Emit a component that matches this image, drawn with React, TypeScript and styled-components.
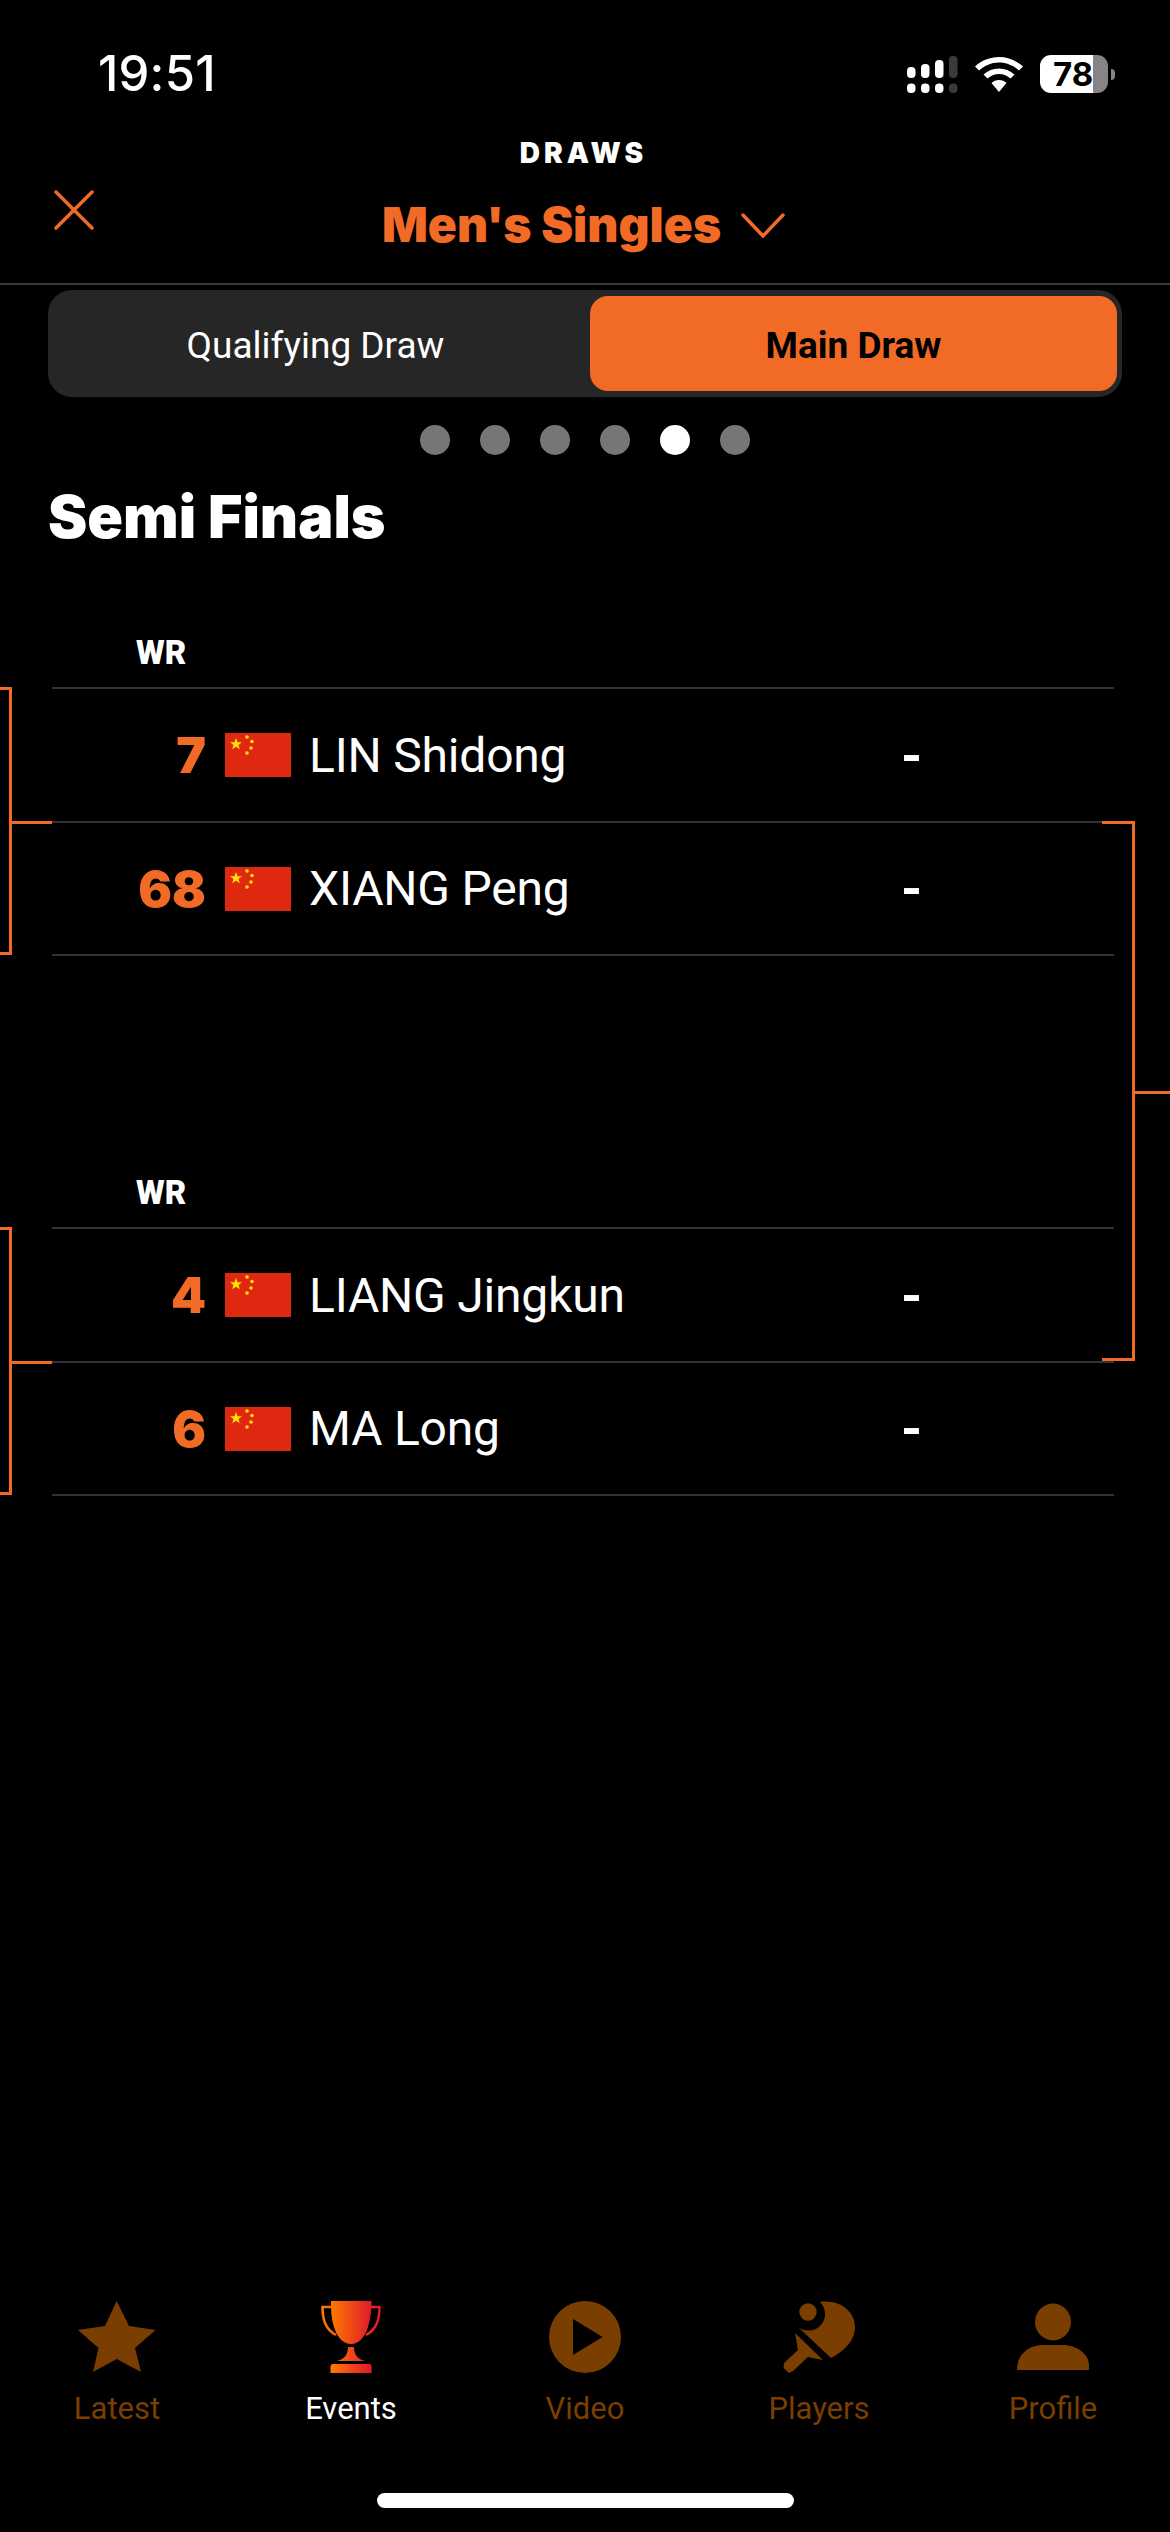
import styled, {createGlobalStyle} from 'styled-components';

const orange = '#f26b26';
const brown = '#7a3e00';
const nameFont = '"Roboto", "Liberation Sans", sans-serif';
const wideFont = '"Inter", "Liberation Sans", sans-serif';

const rounds = [
  [
    {rank: 7, name: 'LIN Shidong'},
    {rank: 68, name: 'XIANG Peng'},
  ],
  [
    {rank: 4, name: 'LIANG Jingkun'},
    {rank: 6, name: 'MA Long'},
  ],
];

const GlobalStyle = createGlobalStyle`
  html, body {
    margin: 0;
    padding: 0;
    background: #000;
  }
`;

function App() {
  return (
    <Page>
      <GlobalStyle />
      <StatusBar>
        <Time>19:51</Time>
        <StatusIcons>
          <SignalIcon />
          <WifiIcon />
          <Battery>
            <BatteryLevel>78</BatteryLevel>
          </Battery>
          <BatteryCap />
        </StatusIcons>
      </StatusBar>

      <Header>
        <CloseButton>
          <svg width="40" height="40" viewBox="0 0 40 40" fill="none" stroke={orange} strokeWidth="3.5" strokeLinecap="round">
            <path d="M2 2L38 38M38 2L2 38" />
          </svg>
        </CloseButton>
        <TitleBlock>
          <Eyebrow>DRAWS</Eyebrow>
          <TitleRow>
            <Title>Men's Singles</Title>
            <svg width="44" height="25" viewBox="0 0 44 25" fill="none" stroke={orange} strokeWidth="3.5" strokeLinecap="round">
              <path d="M2 2L22 23L42 2" />
            </svg>
          </TitleRow>
        </TitleBlock>
      </Header>

      <Segments>
        <Segment>Qualifying Draw</Segment>
        <Segment $active>Main Draw</Segment>
      </Segments>

      <Dots>
        {[0, 1, 2, 3, 4, 5].map((i) => (
          <Dot key={i} $active={i === 4} />
        ))}
      </Dots>

      <RoundTitle>Semi Finals</RoundTitle>

      <Rounds>
        {rounds.map((match, m) => (
          <Match key={m}>
            <LeftBracket />
            {m === 0 && <RightBracket />}
            <WrLabel>WR</WrLabel>
            {match.map((player) => (
              <Row key={player.name}>
                <Rank>{player.rank}</Rank>
                <Flag />
                <Name>{player.name}</Name>
                <Score>-</Score>
              </Row>
            ))}
          </Match>
        ))}
      </Rounds>

      <TabBar>
        <Tab>
          <svg width="78" height="72" viewBox="0 0 78 72" fill={brown}>
            <path d="M38.7 0L51 25L77.5 29L57 47L63 71L38.7 58L15 71L20.5 47L0 29L27 25Z" />
          </svg>
          <TabLabel>Latest</TabLabel>
        </Tab>
        <Tab>
          <svg width="60" height="72" viewBox="0 0 60 72">
            <defs>
              <linearGradient id="cup" x1="0" y1="0" x2="1" y2="0">
                <stop offset="0" stopColor="#ff7a00" />
                <stop offset="1" stopColor="#e0182d" />
              </linearGradient>
            </defs>
            <path
              fill="url(#cup)"
              d="M10 0H50.5C50.5 8 50 16 47 26C44 36 38 43 30 43C22 43 16 36 13 26C10 16 10 8 10 0ZM27 46H33C33 53 36 58 44 60H16C24 58 27 53 27 46ZM12 63H48Q50.6 63 50.6 66V72H9.5V66Q9.5 63 12 63Z"
            />
            <path
              fill="none"
              stroke="url(#cup)"
              strokeWidth="2.5"
              d="M10 6H1.500C1.500 18 4 28 15 34M50 6H58.500C58.500 18 56 28 45 34"
            />
          </svg>
          <TabLabel $active>Events</TabLabel>
        </Tab>
        <Tab>
          <svg width="72" height="72" viewBox="0 0 72 72" fill={brown}>
            <path fillRule="evenodd" d="M36 0A36 36 0 1 1 36 72A36 36 0 1 1 36 0ZM24 18V54L53.600 36Z" />
          </svg>
          <TabLabel>Video</TabLabel>
        </Tab>
        <Tab>
          <svg width="72" height="72" viewBox="0 0 72 72" fill={brown}>
            <circle cx="25" cy="11" r="8.700" />
            <path d="M37 1C56 -2 72 10 72 26C72 40 60 51 48 57L14 25A15 15 0 0 0 37 1Z" />
            <path d="M12 32L40 59L25 56L10 70L6 72L0.500 67L1 62L15 49Z" />
          </svg>
          <TabLabel>Players</TabLabel>
        </Tab>
        <Tab>
          <svg width="72" height="72" viewBox="0 0 72 72" fill={brown}>
            <ellipse cx="36" cy="21" rx="18" ry="18.500" />
            <path d="M0 69C0 53 12 44 26 44H46C60 44 72 53 72 65V69Z" />
          </svg>
          <TabLabel>Profile</TabLabel>
        </Tab>
      </TabBar>
      <HomeIndicator />
    </Page>
  );
}

function SignalIcon() {
  const bars = [
    {x: 0, top: 11},
    {x: 14, top: 8},
    {x: 28, top: 4},
    {x: 42, top: 0},
  ];
  return (
    <svg width="51" height="37" viewBox="0 0 51 37">
      {bars.map((b, i) => (
        <g key={b.x} fill={i === 3 ? '#3a3a3a' : '#fff'}>
          <rect x={b.x} y={b.top} width="8.500" height={22 - b.top} rx="4" />
          <rect x={b.x} y="27.500" width="8.500" height="9.500" rx="4" />
        </g>
      ))}
    </svg>
  );
}

function WifiIcon() {
  return (
    <svg width="48" height="35" viewBox="0 0 48 35" fill="#fff">
      <path d="M24 0C33 0 41.500 3.500 48 9.500L44 13.500C38.500 8.500 31.500 5.500 24 5.500C16.500 5.500 9.500 8.500 4 13.500L0 9.500C6.500 3.500 15 0 24 0Z" />
      <path d="M24 11.500C30 11.500 35 13.500 39.500 17.500L35.500 21.500C32.500 18.800 28.500 17 24 17C19.500 17 15.500 18.800 12.500 21.500L8.500 17.500C13 13.500 18 11.500 24 11.500Z" />
      <path d="M24 23C27 23 29.500 24 31.500 26L24 35L16.500 26C18.500 24 21 23 24 23Z" />
    </svg>
  );
}

function Flag() {
  const small = [
    [22, 4],
    [27, 8.500],
    [26, 15],
    [22, 20],
  ];
  return (
    <FlagBox width="66" height="44" viewBox="0 0 66 44">
      <rect width="66" height="44" fill="#de2910" />
      <path
        fill="#ffde00"
        d="M11 5L12.600 9.200H17L13.500 11.900L14.800 16.200L11 13.700L7.200 16.200L8.500 11.900L5 9.200H9.400Z"
      />
      {small.map(([x, y]) => (
        <circle key={y} cx={x} cy={y} r="1.800" fill="#ffde00" />
      ))}
    </FlagBox>
  );
}

const Page = styled.div`
  width: 1170px;
  height: 2532px;
  overflow: hidden;
  background: #000;
  display: flex;
  flex-direction: column;
  color: #fff;
`;

// status bar
const StatusBar = styled.div`
  height: 130px;
  box-sizing: border-box;
  padding: 55px 55px 0 98px;
  display: flex;
  justify-content: space-between;
  align-items: flex-start;
`;

const Time = styled.div`
  font-family: ${wideFont};
  font-weight: 500;
  font-size: 49px;
  line-height: 38px;
  letter-spacing: 0.2px;
`;

const StatusIcons = styled.div`
  display: flex;
  align-items: center;
  gap: 17px;
`;

const Battery = styled.div`
  width: 68px;
  height: 38px;
  margin-right: -14px;
  border-radius: 11px;
  background: linear-gradient(90deg, #fff 0 53px, #858585 53px);
  color: #000;
  display: flex;
  align-items: center;
  padding-left: 13px;
  box-sizing: border-box;
`;

const BatteryLevel = styled.span`
  font-family: ${wideFont};
  font-weight: 700;
  font-size: 33px;
  line-height: 38px;
`;

const BatteryCap = styled.div`
  width: 4px;
  height: 11px;
  border-radius: 0 6px 6px 0;
  background: #858585;
`;

// header
const Header = styled.div`
  position: relative;
  height: 153px;
  border-bottom: 2px solid #3a3a3a;
  display: flex;
  justify-content: center;
`;

const CloseButton = styled.div`
  position: absolute;
  left: 54px;
  top: 60px;
  line-height: 0;
`;

const TitleBlock = styled.div`
  display: flex;
  flex-direction: column;
  align-items: center;
  padding-right: 3px;
`;

const Eyebrow = styled.div`
  font-family: ${wideFont};
  font-weight: 900;
  font-size: 28px;
  line-height: 46px;
  letter-spacing: 4px;
`;

const TitleRow = styled.div`
  display: flex;
  align-items: center;
  gap: 20px;
  margin-top: 20px;
`;

const Title = styled.div`
  font-family: ${wideFont};
  font-weight: 900;
  font-size: 48px;
  line-height: 58px;
  color: ${orange};
`;

// draw switch
const Segments = styled.div`
  margin: 5px 48px 0;
  height: 107px;
  box-sizing: border-box;
  padding: 6px 5px;
  background: #262626;
  border-radius: 24px;
  display: grid;
  grid-template-columns: 537px 527px;
`;

const Segment = styled.div<{$active?: boolean}>`
  display: flex;
  align-items: center;
  justify-content: center;
  box-sizing: border-box;
  padding: 4px ${(p) => (p.$active ? 0 : 12)}px 0 0;
  border-radius: 18px;
  font-family: ${nameFont};
  font-size: 37px;
  font-weight: ${(p) => (p.$active ? 700 : 400)};
  color: ${(p) => (p.$active ? '#000' : '#fff')};
  background: ${(p) => (p.$active ? orange : 'transparent')};
`;

const Dots = styled.div`
  margin-top: 28px;
  display: flex;
  justify-content: center;
  gap: 30px;
`;

const Dot = styled.div<{$active?: boolean}>`
  width: 30px;
  height: 30px;
  border-radius: 50%;
  background: ${(p) => (p.$active ? '#fff' : '#767676')};
`;

const RoundTitle = styled.h1`
  margin: 27px 0 0 48px;
  font-family: ${wideFont};
  font-weight: 900;
  font-size: 59px;
  line-height: 70px;
`;

// bracket rows
const Rounds = styled.div`
  margin-top: 75px;
  display: flex;
  flex-direction: column;
  gap: 211px;
`;

const Match = styled.div`
  position: relative;
  padding: 0 56px 0 52px;
`;

const LeftBracket = styled.div`
  position: absolute;
  left: 0;
  top: 60px;
  width: 9px;
  height: 262px;
  border: 3px solid ${orange};
  border-left: 0;

  &::after {
    content: '';
    position: absolute;
    left: 9px;
    top: 131px;
    width: 43px;
    height: 3px;
    background: ${orange};
  }
`;

const RightBracket = styled.div`
  position: absolute;
  right: 35px;
  top: 194px;
  width: 30px;
  height: 534px;
  border: 3px solid ${orange};
  border-left: 0;
  z-index: 1;

  &::after {
    content: '';
    position: absolute;
    right: -38px;
    top: 267px;
    width: 35px;
    height: 3px;
    background: ${orange};
  }
`;

const WrLabel = styled.div`
  height: 60px;
  padding-left: 84px;
  font-family: ${nameFont};
  font-weight: 900;
  font-size: 33px;
  line-height: 52px;
`;

const Row = styled.div`
  height: 134px;
  box-sizing: border-box;
  border-top: 2px solid #333;
  display: flex;
  align-items: center;

  &:last-child {
    height: 135px;
    border-bottom: 2px solid #333;
  }
`;

const Rank = styled.div`
  width: 154px;
  text-align: right;
  font-family: ${wideFont};
  font-weight: 900;
  font-size: 50px;
  color: ${orange};
`;

const FlagBox = styled.svg`
  flex: none;
  margin-left: 19px;
`;

const Name = styled.div`
  width: 592px;
  margin-left: 18px;
  font-family: ${nameFont};
  font-size: 48px;
  letter-spacing: -0.2px;
`;

const Score = styled.div`
  font-family: ${nameFont};
  font-weight: 700;
  font-size: 54px;
`;

// tab bar
const TabBar = styled.div`
  margin-top: auto;
  display: grid;
  grid-template-columns: repeat(5, 234px);
`;

const Tab = styled.div`
  display: flex;
  flex-direction: column;
  align-items: center;
  gap: 16px;
`;

const TabLabel = styled.div<{$active?: boolean}>`
  font-family: ${nameFont};
  font-size: 31px;
  line-height: 40px;
  color: ${(p) => (p.$active ? '#fff' : brown)};
`;

const HomeIndicator = styled.div`
  width: 417px;
  height: 15px;
  margin: 64px auto 24px;
  border-radius: 8px;
  background: #fff;
`;

export default App;
